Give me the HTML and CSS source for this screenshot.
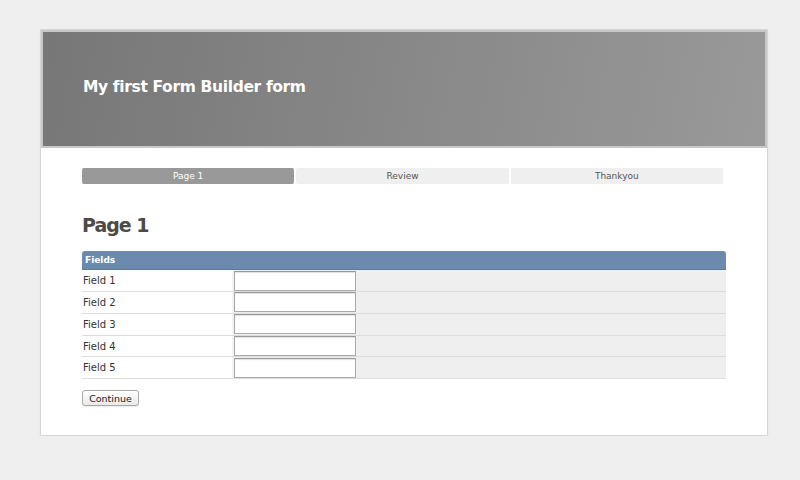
FILE: index.html
```html
<!DOCTYPE html>
<html>
<head>
<meta charset="utf-8">
<link rel="stylesheet" href="styles.css">
</head>
<body>
<div class="container">
  <div class="header">
    <h1 class="title">My first Form Builder form</h1>
  </div>
  <div class="content">
    <div class="tabs">
      <div class="tab active">Page 1</div>
      <div class="tab">Review</div>
      <div class="tab">Thankyou</div>
    </div>
    <h2 class="page-title">Page 1</h2>
    <div class="fieldset">
      <div class="legend">Fields</div>
      <div class="row"><div class="label">Field 1</div><div class="cell"><input class="input" type="text"></div></div>
      <div class="row"><div class="label">Field 2</div><div class="cell"><input class="input" type="text"></div></div>
      <div class="row"><div class="label">Field 3</div><div class="cell"><input class="input" type="text"></div></div>
      <div class="row"><div class="label">Field 4</div><div class="cell"><input class="input" type="text"></div></div>
      <div class="row"><div class="label">Field 5</div><div class="cell"><input class="input" type="text"></div></div>
    </div>
    <button class="btn" type="button">Continue</button>
  </div>
</div>
</body>
</html>
```
FILE: styles.css
```css
html, body {
  margin: 0;
  padding: 0;
  background: #efefef;
}
body {
  padding-top: 29px;
  font-family: "DejaVu Sans", "Liberation Sans", sans-serif;
}
.container {
  width: 726px;
  height: 405px;
  margin-left: 40px;
  background: #ffffff;
  border: 1px solid #d6d6d6;
  box-shadow: 0 1px 2px rgba(0,0,0,0.06);
}
.header {
  height: 114px;
  border: 2px solid #c8c8c8;
  background: linear-gradient(100deg, #777777 0%, #888888 50%, #999999 100%);
  display: flex;
  align-items: center;
  padding-left: 40px;
}
.title {
  margin: 0;
  margin-top: -5px;
  color: #ffffff;
  font-size: 15.5px;
  font-weight: bold;
  letter-spacing: -0.35px;
}
.content {
  padding: 20px 41px 0 41px;
}
.tabs {
  display: grid;
  grid-template-columns: 1fr 1fr 1fr;
  gap: 2px;
  width: 641px;
}
.tab {
  height: 16px;
  line-height: 16px;
  text-align: center;
  font-size: 9px;
  color: #555555;
  background: #efefef;
  border-radius: 2px;
}
.tab.active {
  background: #999999;
  color: #ffffff;
}
.page-title {
  margin: 28px 0 13px 0;
  font-size: 19px;
  line-height: 26px;
  font-weight: bold;
  letter-spacing: -1px;
  color: #4e4a46;
}
.fieldset {
  width: 644px;
}
.legend {
  height: 18px;
  line-height: 18px;
  background: #6c8aae;
  color: #ffffff;
  font-size: 9px;
  font-weight: bold;
  padding-left: 3px;
  border-radius: 3px 3px 0 0;
  border-bottom: 1px solid #5d7a9c;
}
.row {
  display: flex;
  height: 21px;
  border-bottom: 1px solid #dddddd;
}
.row:nth-child(odd) {
  height: 20.5px;
}
.label {
  width: 149px;
  padding-left: 1px;
  font-size: 10px;
  color: #333333;
  line-height: 21px;
  background: #ffffff;
  border-right: 1px solid #f6f6f6;
}
.cell {
  flex: 1;
  background: #efefef;
  padding-left: 1px;
  display: flex;
  align-items: center;
}
.input {
  box-sizing: border-box;
  width: 122px;
  height: 20px;
  margin: 0;
  border: 1px solid #aaaaaa;
  border-top-color: #999999;
  box-shadow: inset 0 1px 1px rgba(0,0,0,0.12);
  background: #ffffff;
  padding: 0;
}
.btn {
  margin-top: 11px;
  width: 57px;
  height: 16px;
  padding: 0;
  font-family: "DejaVu Sans", "Liberation Sans", sans-serif;
  font-size: 9.5px;
  color: #222222;
  background: linear-gradient(#ffffff, #eaeaea);
  border: 1px solid #a8a8a8;
  border-radius: 3px;
  box-shadow: 0 1px 1px rgba(0,0,0,0.08);
}
```
